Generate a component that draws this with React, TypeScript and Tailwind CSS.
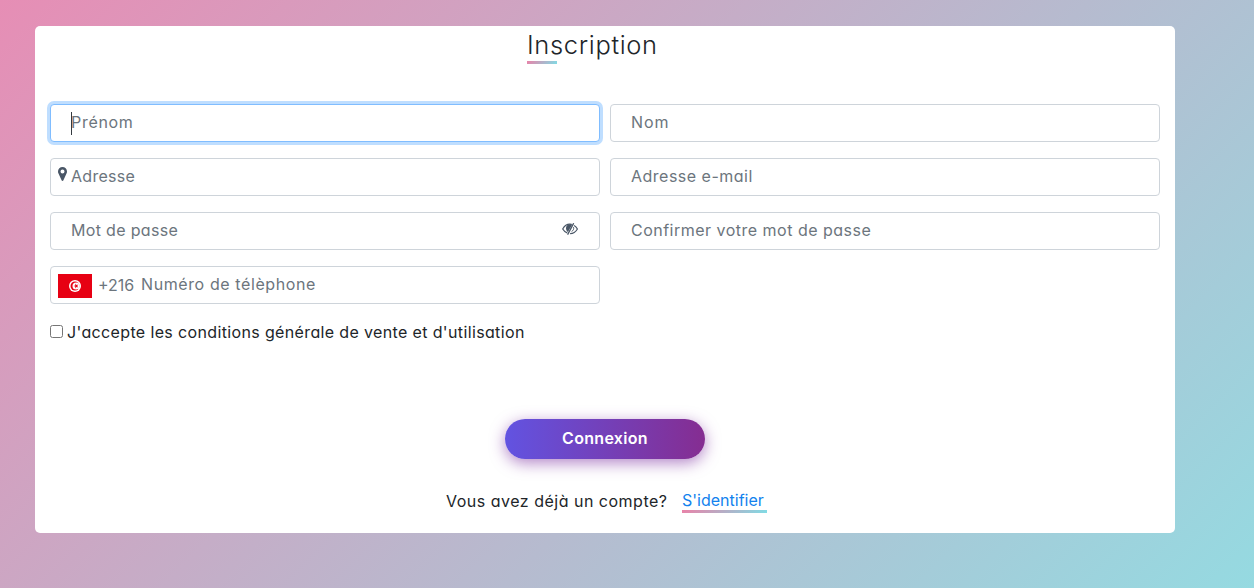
import type { InputHTMLAttributes, ReactNode } from "react";

type FieldProps = InputHTMLAttributes<HTMLInputElement> & {
  leading?: ReactNode;
  trailing?: ReactNode;
  focused?: boolean;
  pad?: string;
  spacing?: string;
};

function Field({ leading, trailing, focused, pad = "pl-5", spacing = "tracking-[0.49px]", ...rest }: FieldProps) {
  return (
    <div
      className={`relative flex h-[38px] items-center rounded border bg-white ${
        focused ? "border-[#80bdff] ring-[3px] ring-[#bfdeff]" : "border-[#ced4da]"
      }`}
    >
      {leading}
      <input
        {...rest}
        className={`h-full min-w-0 flex-1 bg-transparent pb-0.5 text-base text-[#495057] outline-none placeholder:text-[#6c757d] ${pad} ${spacing}`}
      />
      {trailing}
      {focused && <span className="absolute top-[7px] left-5 h-[23px] w-px bg-[#343a40]" />}
    </div>
  );
}

function PinIcon() {
  return (
    <svg viewBox="0 0 9 14" className="ml-[7px] mb-1.5 h-3.5 w-[9px] shrink-0" fill="#495666">
      <path
        fillRule="evenodd"
        d="M4.500 0A4.500 4.500 0 0 0 0 4.500c0 .9.2 1.500.5 2.100L3.700 13.400a.9.9 0 0 0 1.600 0L8.500 6.600c.3-.6.5-1.200.5-2.100A4.500 4.500 0 0 0 4.500 0Zm0 2.500a2 2 0 1 1 0 4 2 2 0 0 1 0-4Z"
      />
    </svg>
  );
}

function EyeClosedIcon() {
  return (
    <svg viewBox="0 0 16 12" className="mr-[21px] mb-1 h-3 w-4 shrink-0" fill="none" stroke="#495666">
      <path d="M9.600 1.400C5.800.6 2.600 2.700.7 6c1.100 1.900 2.600 3.200 4.500 3.900" strokeWidth="1.200" />
      <path d="M12.100 2.400C13.500 3.200 14.600 4.500 15.400 6c-1.700 3-4.300 4.700-7.300 4.700" strokeWidth="1.200" />
      <path d="M10.300 1.500C6.500.7 4 2.200 4 5c0 1.600.6 2.900 1.900 4Z" fill="#495666" stroke="none" />
      <path d="M11.700.2 5.600 11.600" strokeWidth="1.300" />
      <path d="M11.500 4.200c.6 1.600-.2 3.500-1.900 4.300" strokeWidth="1" />
    </svg>
  );
}

function TunisiaFlag() {
  return (
    <svg viewBox="0 0 34 24" className="mt-0.5 ml-[7px] h-6 w-[34px] shrink-0">
      <path fill="#e70013" d="M0 0h34v24H0z" />
      <circle cx="17" cy="12" r="6" fill="#fff" />
      <circle cx="17" cy="12" r="4.500" fill="#e70013" />
      <circle cx="18.100" cy="12" r="3.600" fill="#fff" />
      <path
        fill="#e70013"
        d="m15.400 12 1.900-.6v-2l1.200 1.600 1.900-.6-1.200 1.600 1.200 1.600-1.900-.6-1.200 1.600v-2Z"
      />
    </svg>
  );
}

export default function App() {
  return (
    <main className="h-[588px] w-full overflow-hidden bg-[linear-gradient(135deg,#e68eb5,#95dae1)] pt-[26px] pl-[35px] font-['Inter','Open_Sans',sans-serif] text-base font-[370] text-[#212529] [font-feature-settings:'cv11']">
      <section className="flex h-[507px] w-[1140px] flex-col rounded-[5px] bg-white px-[15px]">
        <header className="flex h-[78px] justify-center">
          <div className="h-[38px] w-[156px]">
            <h1 className="h-[35px] text-[25.5px] leading-[37px] font-[340] whitespace-nowrap tracking-[0.65px]">
              Inscription
            </h1>
            <div className="h-[3px] w-[30px] bg-[linear-gradient(135deg,#ea82a8,#80dce5)]" />
          </div>
        </header>

        <form className="grid grid-cols-2 gap-x-2.5 gap-y-4">
          <Field placeholder="Prénom" focused spacing="tracking-[0.7px]" />
          <Field placeholder="Nom" spacing="tracking-[0.9px]" />
          <Field placeholder="Adresse" leading={<PinIcon />} pad="pl-1" spacing="tracking-[0.3px]" />
          <Field placeholder="Adresse e-mail" />
          <Field
            placeholder="Mot de passe"
            type="password"
            trailing={<EyeClosedIcon />}
            spacing="tracking-[0.33px]"
          />
          <Field placeholder="Confirmer votre mot de passe" type="password" />
          <Field
            placeholder="Numéro de télèphone"
            type="tel"
            pad="pl-2"
            spacing="tracking-[0.6px]"
            leading={
              <>
                <TunisiaFlag />
                <span className="ml-1.5 w-[35px] shrink-0 whitespace-nowrap text-[#6c757d]">+216</span>
              </>
            }
          />
        </form>

        <label className="mt-4 flex h-6 items-center">
          <input
            type="checkbox"
            className="mb-0.5 size-[13px] shrink-0 appearance-none rounded-[2.500px] border border-[#767676] bg-white"
          />
          <span className="ml-1 whitespace-nowrap tracking-[0.36px]">
            J'accepte les conditions générale de vente et d'utilisation
          </span>
        </label>

        <button className="mt-[75px] h-10 w-[200px] shrink-0 self-center rounded-full bg-[linear-gradient(90deg,#6253e1,#852d91)] pb-0.5 font-semibold tracking-[0.3px] text-white shadow-[0_4px_15px_0_rgba(126,52,161,0.6)]">
          Connexion
        </button>

        <p className="mt-[29px] ml-[396px] flex h-7 items-start">
          <span className="w-[236px] pt-px whitespace-nowrap tracking-[0.5px]">Vous avez déjà un compte?</span>
          <a href="#" className="flex h-[25px] w-[85px] flex-col text-[#1282ee]">
            <span className="h-[22px] leading-[24px] whitespace-nowrap">S'identifier</span>
            <span className="h-[3px] bg-[linear-gradient(135deg,#ea82a8,#80dce5)]" />
          </a>
        </p>
      </section>
    </main>
  );
}
